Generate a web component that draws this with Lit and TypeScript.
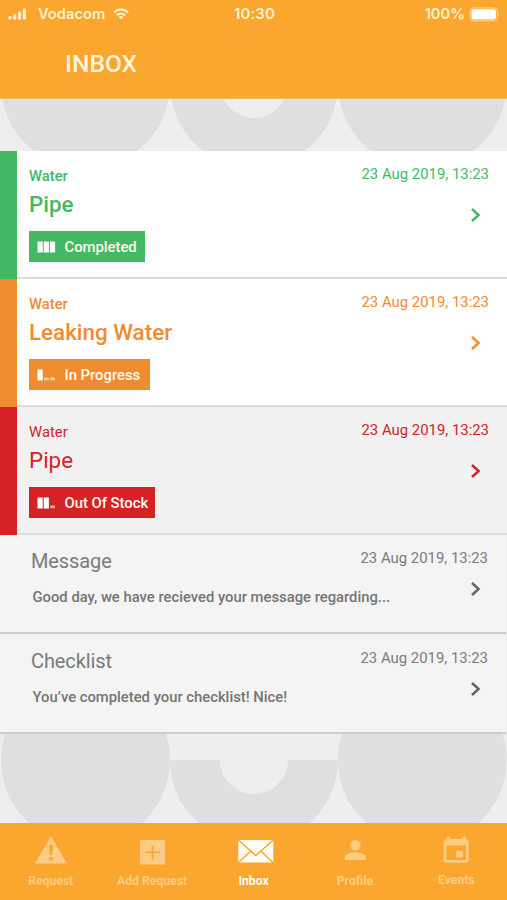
import { LitElement, html, css, svg } from "lit";
import { customElement, property } from "lit/decorators.js";

interface Ticket { tone: string; title: string; status: string; bars: number; width: number; read?: boolean; }
interface Note { title: string; body: string; }

const DATE = "23 Aug 2019, 13:23";

const tickets: Ticket[] = [
  { tone: "green", title: "Pipe", status: "Completed", bars: 3, width: 116 },
  { tone: "orange", title: "Leaking Water", status: "In Progress", bars: 1, width: 121 },
  { tone: "red", title: "Pipe", status: "Out Of Stock", bars: 2, width: 126, read: true },
];

const notes: Note[] = [
  { title: "Message", body: "Good day, we have recieved your message regarding..." },
  { title: "Checklist", body: "You’ve completed your checklist! Nice!" },
];

const chevron = html`<svg class="chevron" width="12" height="16" viewBox="0 0 12 16"><path d="M2 2L8.6 8L2 14" fill="none" stroke="currentColor" stroke-width="2.5"/></svg>`;

@customElement("status-strip")
class StatusStrip extends LitElement {
  static styles = css`
    :host { display: grid; grid-template-columns: 1fr auto 1fr; align-items: center; height: 28px; padding: 0 6px 0 8px;
      font: 600 15px/28px Inter, sans-serif; color: #fff3cf; }
    .left { display: flex; align-items: center; }
    .right { display: flex; align-items: center; justify-content: flex-end; }
    .carrier { width: 67px; margin: 0 8px 0 11px; font-size: 14.7px; letter-spacing: 0; }
    .time { font-size: 15px; letter-spacing: 0.1px; }
    .percent { font-size: 14.7px; margin-right: 4px; }
    svg { display: block; }
  `;
  render() {
    return html`
      <div class="left">
        <svg width="19" height="12" viewBox="0 0 19 12" fill="currentColor">
          <rect x="0.5" y="8" width="3" height="3.5" rx="1"/><rect x="5.3" y="6" width="3" height="5.5" rx="1"/>
          <rect x="10" y="3.5" width="3.2" height="8" rx="1"/><rect x="14.8" y="0.5" width="3.2" height="11" rx="1"/>
        </svg>
        <span class="carrier">Vodacom</span>
        <svg width="16" height="12" viewBox="0 0 16 12" fill="none" stroke="currentColor" stroke-width="2">
          <path d="M1 4.6C5 0.6 11 0.6 15 4.6"/><path d="M3.7 7.4C6.2 5 9.8 5 12.3 7.4"/>
          <path d="M5.6 9C7 7.8 9 7.8 10.4 9L8 11.6Z" fill="currentColor" stroke="none"/>
        </svg>
      </div>
      <span class="time">10:30</span>
      <div class="right">
        <span class="percent">100%</span>
        <svg width="32" height="15" viewBox="0 0 32 15">
          <rect x="0.9" y="0.9" width="27.5" height="13" rx="3.5" fill="none" stroke="#ffd795" stroke-width="1"/>
          <rect x="2.4" y="2.3" width="24.5" height="10.2" rx="2" fill="#fff"/>
          <path d="M29.6 5.4Q31.4 7.4 29.6 9.4Z" fill="#ffd795"/>
        </svg>
      </div>`;
  }
}

@customElement("ticket-row")
class TicketRow extends LitElement {
  @property({ attribute: false }) item!: Ticket;
  static styles = css`
    :host { display: block; }
    .row { display: flex; height: 128px; background: #fff; color: var(--tone); }
    .row.read { background: #f1f1f1; }
    .green { --tone: #43b966; } .orange { --tone: #f08c30; } .red { --tone: #d62226; }
    .stripe { width: 17px; background: var(--tone); }
    .content { flex: 1; display: flex; justify-content: space-between; box-sizing: border-box;
      padding: 0 18px 0 12px; border-bottom: 2px solid #dcdcdc; }
    .category { font-size: 14.8px; line-height: 18px; font-weight: 500; margin-top: 16px; }
    .title { font-size: 22.4px; line-height: 28px; font-weight: 500; margin-top: 5px; white-space: nowrap; }
    .read .category, .read .title { font-weight: 400; }
    .badge { display: flex; align-items: center; box-sizing: border-box; height: 31px; padding-left: 8px; margin-top: 13px;
      background: var(--tone); color: #fffbe8; font-size: 14.8px; font-weight: 500; white-space: nowrap; }
    .badge svg { margin-right: 8.5px; }
    .side { display: flex; flex-direction: column; align-items: flex-end; }
    .date { font-size: 14.9px; line-height: 18px; margin-top: 14px; white-space: nowrap; }
    .chevron { margin: 24px 7px 0 0; }
  `;
  render() {
    const { tone, title, status, bars, width, read } = this.item;
    return html`<div class="row ${tone} ${read ? "read" : ""}">
      <div class="stripe"></div>
      <div class="content">
        <div>
          <div class="category">Water</div>
          <div class="title">${title}</div>
          <div class="badge" style="width:${width}px">
            <svg width="19" height="12" viewBox="0 0 19 12" fill="#fff">
              ${[0, 1, 2].map((i) => i < bars
                ? svg`<rect x=${0.5 + i * 6.2} y="0.5" width="5.2" height="11"/>`
                : svg`<rect x=${0.8 + i * 6.2} y="8.5" width="4.8" height="2.7" opacity="0.6"/>`)}
            </svg>${status}
          </div>
        </div>
        <div class="side"><div class="date">${DATE}</div>${chevron}</div>
      </div>
    </div>`;
  }
}

@customElement("note-row")
class NoteRow extends LitElement {
  @property({ attribute: false }) item!: Note;
  static styles = css`
    :host { display: block; height: 99px; }
    :host(:last-of-type) { height: 100px; }
    .row { display: flex; box-sizing: border-box; height: 100%; margin-right: 1px;
      padding: 0 18px 0 31px; background: #f4f4f4; border-bottom: 2px solid #cdcdcd; color: #7b7b7b; }
    :host(:last-of-type) .row { padding-top: 1px; }
    .text { flex: 1; min-width: 0; }
    .title { font-size: 20px; line-height: 26px; letter-spacing: -0.1px; margin-top: 13px; }
    .body { font-size: 14.8px; line-height: 18px; font-weight: 500; margin: 14px 0 0 1.5px; white-space: nowrap; color: #757575; }
    .side { display: flex; flex-direction: column; align-items: flex-end; }
    .date { font-size: 14.9px; line-height: 18px; margin-top: 14px; white-space: nowrap; }
    .chevron { flex: none; margin: 14px 6px 0 0; color: #656565; }
  `;
  render() {
    return html`<div class="row">
      <div class="text"><div class="title">${this.item.title}</div><div class="body">${this.item.body}</div></div>
      <div class="side"><div class="date">${DATE}</div>${chevron}</div>
    </div>`;
  }
}

const tabs = [
  { label: "Request", icon: svg`<path fill-rule="evenodd" d="M18 1L34 28.5H2ZM16 10L16.7 20H19.3L20 10ZM16.2 22V25.5H19.8V22Z"/>` },
  { label: "Add Request", icon: svg`<path fill-rule="evenodd" d="M6 5H31V29.5H6ZM17.6 10.5V16.4H11V18.2H17.6V24.5H19.4V18.2H26V16.4H19.4V10.5Z"/>` },
  { label: "Inbox", icon: svg`<g transform="translate(2.8 0)"><rect x="0.5" y="5" width="35" height="22.5"/><path d="M0 4.5L18 20.5L36 4.5M0.5 27.7L13 16M35.5 27.7L23 16" fill="none" stroke="#faa62f" stroke-width="1.5"/></g>` },
  { label: "Profile", icon: svg`<circle cx="18.3" cy="10.3" r="5.3"/><path d="M7.8 25V22.3C7.8 19.1 13.7 17.3 18.3 17.3S28.8 19.1 28.8 22.3V25Z"/>` },
  { label: "Events", icon: svg`<path fill-rule="evenodd" d="M8.9 1.5H11.9V4H24.5V1.5H27.5V4Q30.7 4 30.7 6.7V25Q30.7 27.7 28 27.7H8.4Q5.7 27.7 5.7 25V6.7Q5.7 4 8.9 4ZM8.5 10.5V24.9H27.9V10.5ZM18 15.7H25V22.4H18Z"/>` },
];

@customElement("tab-bar")
class TabBar extends LitElement {
  static styles = css`
    :host { display: grid; grid-template-columns: repeat(5, 1fr); height: 77px; background: #faa62f; }
    .tab { display: flex; flex-direction: column; align-items: center; padding-top: 12px; color: #fdcc84; fill: currentColor;
      font-size: 12.2px; line-height: 14px; font-weight: 700; white-space: nowrap; }
    .tab.on { color: #fffdf5; }
    .tab svg { margin-bottom: 6.5px; overflow: visible; }
    .tab:last-child svg { margin-bottom: 5.5px; }
  `;
  render() {
    return tabs.map((t) => html`<div class="tab ${t.label === "Inbox" ? "on" : ""}">
      <svg width="36" height="32" viewBox="0 0 36 32">${t.icon}</svg>${t.label}</div>`);
  }
}

@customElement("pattern-band")
class PatternBand extends LitElement {
  @property({ type: Number }) height = 52;
  @property({ type: Number }) center = 0;
  static styles = css`:host { display: block; } svg { display: block; background: #eee; fill: #dfdfdf; }`;
  render() {
    const c = this.center;
    return html`<svg width="507" height=${this.height}>
      <circle cx="85.5" cy=${c} r="84.5"/><circle cx="422.3" cy=${c} r="84.3"/>
      <path d="M170 ${c}H220A34 34 0 0 0 288 ${c}H338A84 84 0 0 1 170 ${c}Z"/>
    </svg>`;
  }
}

@customElement("app-root")
class AppRoot extends LitElement {
  static styles = css`
    :host { display: flex; flex-direction: column; width: 507px; height: 900px; overflow: hidden; background: #eee;
      font-family: Roboto, sans-serif; }
    .header { height: 99px; box-sizing: border-box; background: #faa62f; border-bottom: 1px solid #f3b969; }
    .heading { margin: 21px 0 0 65px; font-size: 24.6px; line-height: 30px; font-weight: 500; color: #fff6d8; }
  `;
  render() {
    return html`
      <div class="header"><status-strip></status-strip><div class="heading">INBOX</div></div>
      <pattern-band .height=${52} .center=${-15}></pattern-band>
      ${tickets.map((t) => html`<ticket-row .item=${t}></ticket-row>`)}
      ${notes.map((n) => html`<note-row .item=${n}></note-row>`)}
      <pattern-band .height=${89} .center=${26}></pattern-band>
      <tab-bar></tab-bar>`;
  }
}
